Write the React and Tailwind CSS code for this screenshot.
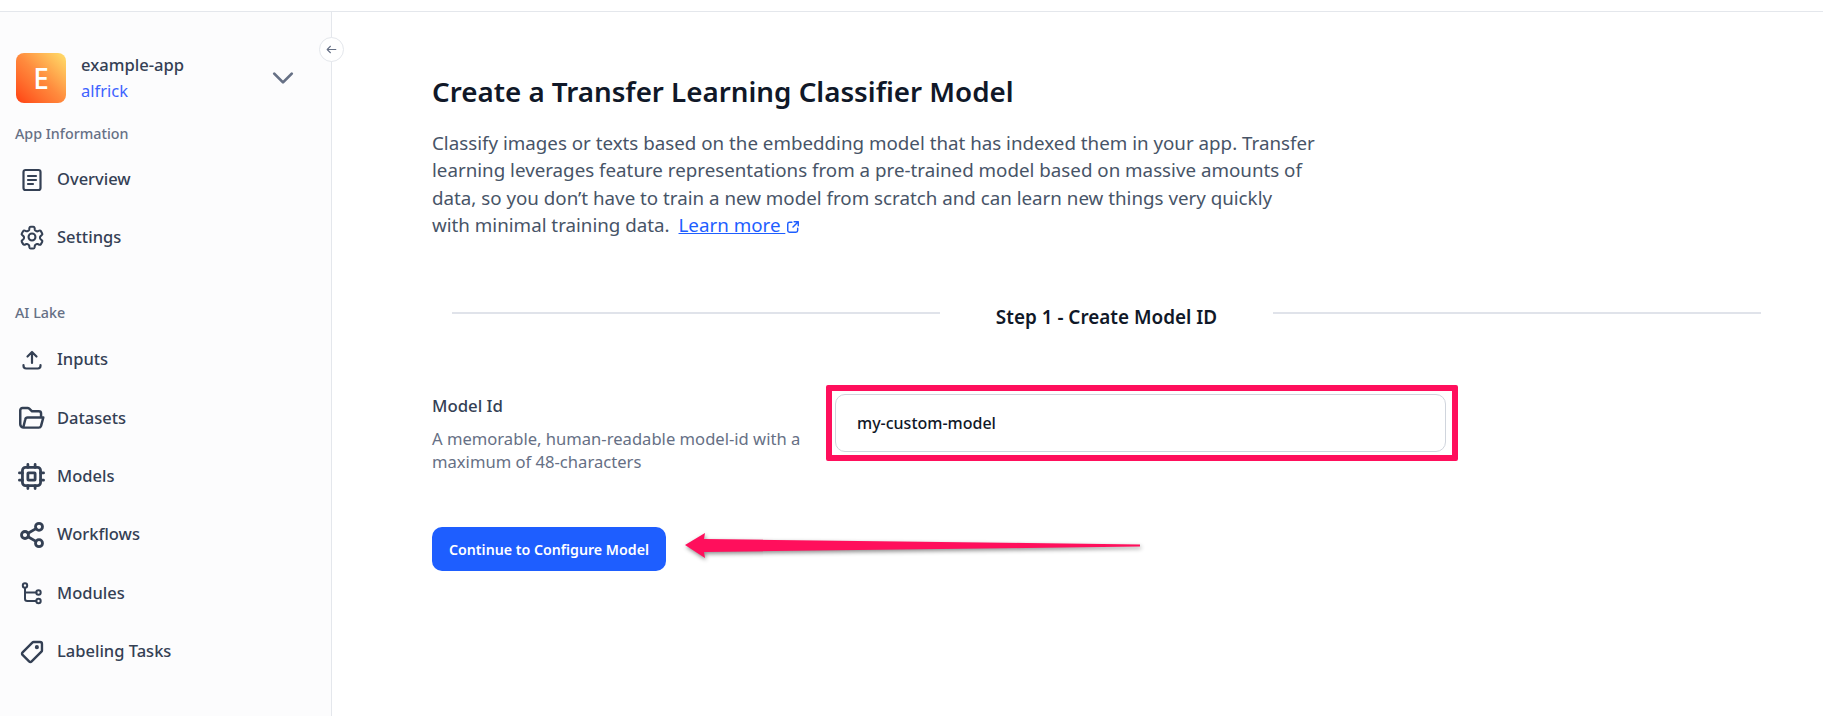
import React from "react";

const S = ({ children, size = "w-6 h-6" }) => (
  <svg viewBox="0 0 24 24" fill="none" stroke="currentColor" strokeWidth="2.2" strokeLinecap="round" strokeLinejoin="round" className={`shrink-0 text-[#344054] ${size}`}>
    {children}
  </svg>
);

const icons = {
  overview: <S><rect x="3.500" y="2" width="17" height="20" rx="2" /><path d="M8 8h8M8 12h8M8 16h5" /></S>,
  settings: (
    <S size="w-[26px] h-[26px] -ml-[1px] -mr-[1px]">
      <g strokeWidth="1.900">
        <path d="M9.600 3.600c.1-.6.6-1 1.200-1h2.400c.6 0 1.100.4 1.200 1l.2 1.600c.1.4.3.7.7.9l.8.5c.3.2.8.2 1.100.1l1.500-.6c.6-.2 1.200 0 1.500.5l1.200 2.100c.3.5.2 1.100-.3 1.500l-1.200 1c-.3.2-.5.6-.5 1v.8c0 .4.2.8.5 1l1.200 1c.5.4.6 1 .3 1.500l-1.200 2.100c-.3.5-.9.7-1.500.5l-1.500-.6c-.4-.1-.8-.1-1.100.1l-.8.5c-.4.2-.6.5-.7.9l-.2 1.600c-.1.6-.6 1-1.200 1h-2.400c-.6 0-1.100-.4-1.200-1l-.2-1.600c-.1-.4-.3-.7-.7-.9l-.8-.5c-.3-.2-.8-.2-1.100-.1l-1.500.6c-.6.2-1.200 0-1.500-.5l-1.200-2.100c-.3-.5-.2-1.100.3-1.500l1.200-1c.3-.2.5-.6.5-1v-.8c0-.4-.2-.8-.5-1l-1.200-1c-.5-.4-.6-1-.3-1.500l1.200-2.100c.3-.5.9-.7 1.500-.5l1.500.6c.4.1.8.1 1.100-.1l.8-.5c.4-.2.6-.5.7-.9z" />
        <circle cx="12" cy="12" r="3.200" />
      </g>
    </S>
  ),
  inputs: <S><path d="M12 15V4M7.500 8.500 12 4l4.500 4.500M3.500 17v.8c0 1.500 1.200 2.700 2.700 2.700h11.600c1.500 0 2.700-1.200 2.700-2.700V17" /></S>,
  datasets: <S size="w-[27px] h-[27px] -ml-[2px] -mr-[1px]"><path d="M5 21h13.500c1 0 1.700-.6 2-1.500l2-7.500H8.500c-1 0-1.800.6-2 1.500L5 19.500M5 21a3 3 0 0 1-3-3V5.500a2 2 0 0 1 2-2h4.500c.6 0 1.100.2 1.500.6l2.500 2.400h6c1.100 0 2 .9 2 2V12" /></S>,
  models: <S size="w-[29px] h-[29px] -ml-[3px] -mr-[2px]"><g strokeWidth="2.300"><rect x="4.500" y="4.500" width="15" height="15" rx="2.500" /><rect x="9" y="9" width="6" height="6" rx="0.500" /><path d="M9 2v2.500M15 2v2.500M9 19.500V22M15 19.500V22M2 9h2.500M2 15h2.500M19.500 9H22M19.500 15H22" /></g></S>,
  workflows: <S size="w-[28px] h-[28px] -ml-[2px] -mr-[2px]"><g strokeWidth="2.400"><circle cx="18" cy="5" r="3" /><circle cx="6" cy="12" r="3" /><circle cx="18" cy="19" r="3" /><path d="m8.600 10.500 6.800-4M8.600 13.500l6.800 4" /></g></S>,
  modules: <S><g strokeWidth="2"><circle cx="5" cy="4.500" r="2.200" /><circle cx="18.500" cy="11.500" r="2.200" /><circle cx="18.500" cy="20" r="2.200" /><path d="M5 6.700v11c0 1.300 1 2.300 2.300 2.300h9M5 11.500h11.300" /></g></S>,
  tasks: <S size="w-[26px] h-[26px] -ml-[1px] -mr-[1px]"><path d="M13.500 2.800h6c1 0 1.700.7 1.700 1.700v6c0 .5-.2.9-.5 1.200l-9 9c-.7.700-1.700.700-2.400 0l-6-6c-.7-.7-.7-1.700 0-2.400l9-9c.3-.3.7-.5 1.200-.5z" /><circle cx="16.500" cy="7.500" r="0.800" fill="currentColor" /></S>,
};

const Item = ({ icon, label, className = "h-[58.4px]" }) => (
  <div className={`flex items-center pl-[20px] gap-[13px] text-[16.5px] font-medium text-[#344054] ${className}`}>
    {icons[icon]}
    <span>{label}</span>
  </div>
);

const Section = ({ children, className = "" }) => (
  <div className={`pl-[15px] text-[14.3px] leading-[20px] font-medium text-[#667085] ${className}`}>{children}</div>
);

export default function App() {
  return (
    <div className="h-[716px] w-[1823px] overflow-hidden bg-white flex flex-col" style={{ fontFamily: "'Noto Sans', sans-serif" }}>
      <div className="h-[12px] shrink-0 border-b border-[#e4e7ec]" />
      <div className="flex flex-1 min-h-0">
        <aside className="relative w-[332px] shrink-0 bg-[#fcfcfd] border-r border-[#e4e7ec]">
          <button className="absolute -right-[13px] top-[25px] w-[25px] h-[25px] rounded-full bg-white border border-[#e4e7ec] flex items-center justify-center text-[#667085]">
            <svg viewBox="0 0 24 24" fill="none" stroke="currentColor" strokeWidth="2" strokeLinecap="round" strokeLinejoin="round" className="w-[13px] h-[13px]"><path d="M20 12H4M10 6l-6 6 6 6" /></svg>
          </button>
          <div className="flex items-center pl-[16px] pr-[33px] pt-[40px]">
            <div className="w-[50px] h-[50px] rounded-[8px] flex items-center justify-center text-white text-[28px] font-medium bg-gradient-to-tr from-[#ff3d0f] via-[#ff8a3d] to-[#ffdf6b]">E</div>
            <div className="ml-[15px] flex-1">
              <div className="text-[16.6px] leading-[26px] font-medium text-[#344054]">example-app</div>
              <div className="text-[16.5px] leading-[26px] text-[#3e63ff]">alfrick</div>
            </div>
            <svg viewBox="0 0 24 24" fill="none" stroke="#667085" strokeWidth="2.200" strokeLinecap="round" strokeLinejoin="round" className="w-[30px] h-[30px]"><path d="m5 8.500 7 7 7-7" /></svg>
          </div>
          <Section className="mt-[20px]">App Information</Section>
          <div className="mt-[7px]">
            <Item icon="overview" label="Overview" className="h-[57px]" />
            <Item icon="settings" label="Settings" />
          </div>
          <Section className="mt-[37px]">AI Lake</Section>
          <div className="mt-[7px]">
            <Item icon="inputs" label="Inputs" />
            <Item icon="datasets" label="Datasets" />
            <Item icon="models" label="Models" />
            <Item icon="workflows" label="Workflows" />
            <Item icon="modules" label="Modules" />
            <Item icon="tasks" label="Labeling Tasks" />
          </div>
        </aside>
        <main className="relative flex-1 pl-[100px] pt-[60px]">
          <h1 className="text-[27.75px] leading-[38px] font-semibold text-[#101828]">Create a Transfer Learning Classifier Model</h1>
          <p className="mt-[19px] whitespace-nowrap text-[18.75px] leading-[27.300px] text-[#475467]">
            Classify images or texts based on the embedding model that has indexed them in your app. Transfer<br />
            learning leverages feature representations from a pre-trained model based on massive amounts of<br />
            data, so you don’t have to train a new model from scratch and can learn new things very quickly<br />
            with minimal training data.{" "}
            <a className="ml-[4px] underline text-[#1e5eff]">Learn more&nbsp;</a>
            <svg viewBox="0 0 24 24" fill="none" stroke="#1e5eff" strokeWidth="2.500" strokeLinecap="round" strokeLinejoin="round" className="inline w-[14px] h-[14px] ml-[1px]"><path d="M10 4H6a3 3 0 0 0-3 3v11a3 3 0 0 0 3 3h11a3 3 0 0 0 3-3v-4M14 3h7v7M21 3l-9 9" /></svg>
          </p>
          <div className="mt-[65px] ml-[20px] w-[1309px] flex items-center">
            <div className="w-[488px] h-[2px] bg-[#e0e3ea] -mt-[8px]" />
            <div className="flex-1 text-center text-[18.9px] leading-[28px] font-semibold text-[#101828]">Step 1 - Create Model ID</div>
            <div className="w-[488px] h-[2px] bg-[#e0e3ea] -mt-[8px]" />
          </div>
          <div className="mt-[63px] flex">
            <div className="w-[394px]">
              <div className="text-[16.8px] leading-[24px] font-medium text-[#344054]">Model Id</div>
              <div className="mt-[10px] text-[16.6px] leading-[22.500px] text-[#667085] w-[390px]">A memorable, human-readable model-id with a maximum of 48-characters</div>
            </div>
            <div className="w-[632px] h-[76px] -mt-[9px] border-[6px] border-[#ff0f5c] rounded-[2px] pl-[3px] py-[3px] pr-[6px]">
              <div className="h-full rounded-[10px] border border-[#d0d5dd] bg-white flex items-center pl-[21px] text-[16px] font-medium text-[#101828]">my-custom-model</div>
            </div>
          </div>
          <button className="mt-[54px] w-[234px] h-[44px] rounded-[10px] bg-[#1e5eff] text-white text-[14.2px] font-semibold">Continue to Configure Model</button>
          <svg className="absolute left-[353px] top-[515px] w-[460px] h-[40px] overflow-visible" viewBox="0 0 460 40" style={{ filter: "drop-shadow(1px 2px 2px rgba(0,0,0,0.45))" }}>
            <path d="M0 18 L20 6 L19 12 L455 17.500 L455 19.500 L19 25 L20 31 Z" fill="#ff0f5c" />
          </svg>
        </main>
      </div>
    </div>
  );
}
